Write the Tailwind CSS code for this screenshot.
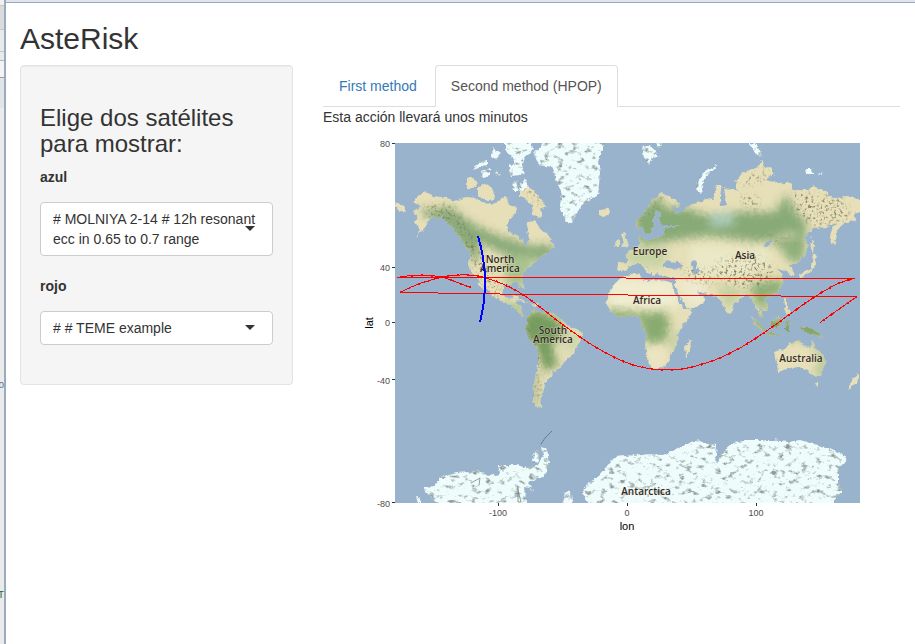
<!DOCTYPE html>
<html lang="es">
<head>
<meta charset="utf-8">
<meta name="viewport" content="width=device-width, initial-scale=1">
<title>AsteRisk</title>
<script src="https://cdn.jsdelivr.net/npm/@tailwindcss/browser@4"></script>
</head>
<body class="flex min-h-screen bg-white font-['Liberation_Sans',Arial,sans-serif] text-sm leading-5 text-[#333]">

<!-- Edge of the window behind -->
<div class="flex w-[6px] shrink-0 border-r border-[#8eabd8] bg-[#ebebeb]" aria-hidden="true">
  <div class="flex w-1 flex-col overflow-hidden text-[10px]">
    <div class="h-[6px] border-b border-[#c8c8c8] bg-[#f0f0f0]"></div>
    <div class="h-6 border-b border-[#c8c8c8] bg-[#d9dbdc]"></div>
    <div class="h-[22px] border-b border-[#c4c8c8] bg-[#e6ebec]"></div>
    <div class="h-[9px] border-b border-[#b4b4b4] bg-[#e6ebec]"></div>
    <div class="h-[17px] border-b border-[#9c9c9c] bg-[#f4f4f4]"></div>
    <div class="h-[30px] bg-[#dfe6e8]"></div>
    <div class="flex h-[285px] items-end justify-end leading-4 text-[#5f6f8c]"><span>o</span></div>
    <div class="flex h-[211px] items-end justify-end font-mono leading-4 text-[#1f6b26]"><span>T</span></div>
  </div>
  <div class="w-px bg-[#a9a9ab]"></div>
</div>

<div class="min-w-0 flex-1">
  <div class="h-[3px] border-b border-[#8eabd8] bg-[#e4e4e6]"></div>

  <header class="px-[14px] pt-[19px] pb-[10px]">
    <h1 class="text-3xl leading-[33px]">AsteRisk</h1>
  </header>

  <div class="grid grid-cols-3">
    <aside class="pr-4 pl-[14px]">
      <form class="rounded border border-[#e3e3e3] bg-[#f5f5f5] px-[19px] pt-[39px] pb-[39px] shadow-[inset_0_1px_1px_rgba(0,0,0,0.05)]">
        <h2 class="mb-[10px] text-2xl leading-[26px]">Elige dos satélites para mostrar:</h2>

        <label for="azul" class="block font-bold">azul</label>
        <div class="relative mt-[15px] mb-5">
          <select id="azul" class="block h-[54px] w-full appearance-none rounded border border-[#ccc] bg-white px-3 py-[6px] text-sm leading-5 whitespace-normal">
            <option># MOLNIYA 2-14 # 12h resonant ecc in 0.65 to 0.7 range</option>
          </select>
          <svg class="pointer-events-none absolute top-1/2 right-[18px] -mt-[3px] h-[5px] w-[10px]" viewBox="0 0 10 5" aria-hidden="true"><path d="M0 0H10L5 5Z" fill="#333"/></svg>
        </div>

        <label for="rojo" class="block font-bold">rojo</label>
        <div class="relative mt-[15px]">
          <select id="rojo" class="block h-[34px] w-full appearance-none rounded border border-[#ccc] bg-white px-3 py-[6px] text-sm leading-5">
            <option># # TEME example</option>
          </select>
          <svg class="pointer-events-none absolute top-1/2 right-[18px] -mt-[3px] h-[5px] w-[10px]" viewBox="0 0 10 5" aria-hidden="true"><path d="M0 0H10L5 5Z" fill="#333"/></svg>
        </div>
      </form>
    </aside>

    <main class="col-span-2 pr-[15px] pl-[14px]">
      <nav class="flex gap-[2px] border-b border-[#ddd]">
        <a href="#first" class="-mb-px rounded-t border border-transparent px-[15px] py-[10px] text-[#337ab7]">First method</a>
        <a href="#second" aria-current="page" class="-mb-px rounded-t border border-[#ddd] border-b-white bg-white px-[15px] py-[10px] text-[#555]">Second method (HPOP)</a>
      </nav>
      <p>Esta acción llevará unos minutos</p>

      <svg class="block h-auto w-full" viewBox="323 127 577 410" role="img" aria-label="Trayectorias de los satélites">
        <defs>
          <clipPath id="panel"><rect x="395" y="143" width="465" height="360"/></clipPath>
          <filter id="coast" x="-5%" y="-5%" width="110%" height="110%">
            <feTurbulence type="fractalNoise" baseFrequency="0.22" numOctaves="3" seed="4" result="n"/>
            <feDisplacementMap in="SourceGraphic" in2="n" scale="5" xChannelSelector="R" yChannelSelector="G"/>
          </filter>
          <filter id="ice" x="-5%" y="-5%" width="110%" height="110%" color-interpolation-filters="sRGB">
            <feTurbulence type="fractalNoise" baseFrequency="0.2" numOctaves="3" seed="9" result="n"/>
            <feDisplacementMap in="SourceGraphic" in2="n" scale="5" xChannelSelector="R" yChannelSelector="G" result="s"/>
            <feTurbulence type="fractalNoise" baseFrequency="0.14 0.2" numOctaves="5" seed="21"/>
            <feColorMatrix values="0 0 0 0 .55  0 0 0 0 .6  0 0 0 0 .6  4 0 0 0 -2.2" result="d"/>
            <feComposite in="d" in2="s" operator="in" result="e"/>
            <feMerge><feMergeNode in="s"/><feMergeNode in="e"/></feMerge>
          </filter>
          <filter id="relief" x="-10%" y="-10%" width="120%" height="120%" color-interpolation-filters="sRGB">
            <feGaussianBlur stdDeviation="3" result="b"/>
            <feTurbulence type="fractalNoise" baseFrequency="0.35" numOctaves="3" seed="3"/>
            <feColorMatrix values="0 0 0 0 .5  0 0 0 0 .48  0 0 0 0 .36  3.5 0 0 0 -1.8"/>
            <feComposite in2="b" operator="in"/>
          </filter>
          <filter id="soft" x="-30%" y="-30%" width="160%" height="160%" color-interpolation-filters="sRGB"><feGaussianBlur stdDeviation="4"/></filter>
          <clipPath id="land">
            <path id="northAmerica" d="M413 212L420 207 414 201 422 193 428 192 433 196 447 198 455 201 467 197 475 198 481 203 493 204 503 198 507 197 509 205 517 207 516 213 507 223 508 232 517 235 523 240 525 247 528 246 529 238 527 230 528 222 535 221 541 229 548 235 552 242 555 247 548 252 540 257 535 262 528 268 523 275 522 279 525 289 521 287 518 283 513 283 504 285 502 292 505 298 511 299 513 295 518 296 516 303 520 307 523 315 528 317 522 317 518 311 512 306 503 302 493 297 488 291 481 281 485 291 482 290 477 279 471 273 468 263 471 256 468 250 460 239 455 232 448 223 442 218 432 217 428 223 422 231 416 238 421 229 415 223 417 215Z"/>
            <path id="southAmerica" d="M528 315L533 310 540 312 553 313 562 320 570 327 581 331 582 338 577 347 575 353 567 358 563 364 558 370 553 372 552 377 545 382 544 389 542 395 540 402 543 408 537 407 533 402 533 391 535 378 538 365 538 350 533 343 528 337 525 328 528 322Z"/>
            <path id="africa" d="M613 286L620 278 628 275 639 273 642 279 648 282 653 279 666 281 672 283 673 290 677 298 683 308 692 311 688 319 682 327 677 335 678 343 672 352 670 359 664 367 653 370 648 362 645 345 647 335 642 327 640 317 630 316 618 317 610 310 606 303 608 293ZM685 347L691 339 690 350 686 358Z"/>
            <path id="eurasia" d="M618 263L627 262 627 257 624 254 635 248 640 243 638 237 643 236 645 241 653 239 663 236 665 229 680 225 670 225 661 225 659 218 661 212 656 211 653 220 654 227 650 235 645 234 642 227 637 229 636 221 645 211 652 200 661 193 668 196 679 203 680 208 673 207 676 214 683 211 687 207 695 203 706 199 714 200 717 185 722 185 720 196 721 206 727 205 724 189 733 188 739 192 735 183 742 173 757 167 762 161 766 167 773 168 773 174 766 180 777 183 788 182 793 186 793 190 807 190 813 186 823 190 833 198 850 197 862 200 862 211 853 215 857 220 843 223 838 230 835 243 831 245 830 235 833 227 838 222 827 227 813 228 805 237 808 246 805 255 798 263 790 265 794 276 791 276 787 270 779 269 783 276 783 284 778 292 770 297 764 298 768 305 767 311 763 311 758 306 764 318 761 318 756 308 752 298 747 295 740 298 734 305 730 314 727 313 722 303 718 297 713 295 703 293 697 290 699 295 706 298 703 304 691 309 687 308 681 298 675 286 675 277 665 277 657 273 653 276 649 268 645 265 651 271 649 275 641 264 633 264 625 272 617 271Z"/>
            <path id="australia" d="M775 352L787 348 790 343 800 340 804 346 809 349 812 340 816 349 823 355 826 363 820 376 812 375 807 370 800 367 790 368 778 372 777 363ZM815 383L820 383 817 387Z"/>
            <path id="islands" d="M621 233L626 232 625 238 629 243 628 247 621 248 624 242ZM616 241L620 239 620 246 615 246ZM599 211L609 208 610 213 604 217 599 215ZM520 182L530 187 543 201 546 208 540 207 542 218 533 215 532 205 526 199 520 196ZM467 178L474 177 478 184 473 189 467 188ZM478 187L485 183 492 188 495 198 487 201 478 196ZM751 317L759 322 766 331 763 332 755 325ZM770 321L780 316 782 323 777 328 771 326ZM767 332L781 335 780 337 767 335ZM785 322L791 322 788 326 790 331 786 331ZM799 326L810 328 819 333 823 338 815 335 806 333ZM784 299L787 299 787 307 791 314 786 314ZM799 274L809 270 813 262 812 254 817 257 814 269 807 274 800 279ZM812 236L814 244 813 252 811 250ZM512 298L521 299 529 303 520 301ZM530 303L539 304 535 307ZM857 374L860 376 856 383 847 391 850 384ZM395 202L404 206 406 212 397 210Z"/>
          </clipPath>
        </defs>

        <g clip-path="url(#panel)">
          <rect x="395" y="143" width="465" height="360" fill="#9ab3cd"/>
          <g filter="url(#coast)">
            <g fill="#e6dfb8">
              <use href="#northAmerica"/><use href="#southAmerica"/><use href="#africa"/><use href="#eurasia"/><use href="#australia"/><use href="#islands"/>
            </g>
            <g clip-path="url(#land)">
              <g filter="url(#soft)">
                <path d="M420 210L450 207 475 225 500 236 530 245 556 245 552 257 530 262 500 252 478 242 480 258 474 262 458 240 440 220 425 216Z" fill="#8aaa79"/>
                <path d="M505 255L535 255 524 290 505 284Z" fill="#a9c28e"/>
                <path d="M480 255L503 255 500 280 485 280Z" fill="#e2dfb4"/>
                <path d="M488 290L500 300 522 305 522 318 508 308Z" fill="#a5bd87"/>
                <path d="M522 318L535 309 558 318 564 333 552 345 556 362 562 363 545 372 535 345 524 338Z" fill="#769c5e"/>
                <path d="M532 370L538 372 538 408 532 405Z" fill="#abb98c"/>
                <path d="M563 330L583 333 576 352 562 350Z" fill="#cdd6aa"/>
                <path d="M605 277L674 281 680 307 650 308 610 307Z" fill="#efecd0"/>
                <path d="M608 309L640 313 665 312 670 322 666 342 645 343 640 320 610 320Z" fill="#88ab70"/>
                <path d="M674 334L682 330 676 352 670 352Z" fill="#b9c899"/>
                <path d="M645 345L668 345 662 372 648 368Z" fill="#ebe4c2"/>
                <path d="M635 215L660 195 664 207 686 208 705 215 730 212 752 212 775 212 786 194 796 212 806 222 806 236 790 232 762 242 740 240 710 236 690 238 665 242 640 244 636 228Z" fill="#88aa76"/>
                <path d="M768 242L806 234 804 262 790 262 780 248Z" fill="#8fb07b"/>
                <path d="M710 213L734 213 734 226 710 228Z" fill="#a9c8b4"/>
                <path d="M616 256L650 244 668 252 662 268 630 264Z" fill="#c6d2a3"/>
                <path d="M690 245L765 248 775 262 740 276 690 274Z" fill="#eae8c6"/>
                <path d="M676 278L706 280 706 306 688 306Z" fill="#eeeace"/>
                <path d="M750 284L784 278 782 294 768 298 768 312 754 302Z" fill="#8eae76"/>
                <path d="M716 285L748 290 738 298 728 312Z" fill="#c1cfa0"/>
                <path d="M810 340L824 352 828 365 818 378 814 375 821 362Z" fill="#a9c18d"/>
                <path d="M748 315L824 323 824 340 768 338Z" fill="#82a36c"/>
                <path d="M618 232L632 240 628 250 616 247Z" fill="#d6dcb4"/>
              </g>
            </g>
            <path d="M663 265C666 258 670 260 673 263 676 260 681 263 683 267 676 270 668 268 663 267ZM691 262C695 258 699 262 696 267 701 273 697 277 693 273 692 269 693 267 691 262ZM765 245L771 239 773 241 767 247Z" fill="#9ab3cd"/>
          </g>
          <g clip-path="url(#land)">
            <g filter="url(#relief)">
              <path d="M418 205L450 205 472 235 480 252 496 284 503 298 495 296 472 262 455 225 425 215Z"/>
              <path d="M527 316L531 335 541 347 540 395 535 400 536 350 526 335Z"/>
              <path d="M792 190L845 200 850 218 815 226 797 215ZM742 195L760 197 755 210 743 207ZM765 235L805 240 770 242ZM718 262L750 252 775 268 770 282 750 290 728 284 715 274ZM680 268L715 270 712 285 690 280ZM636 225L652 205 662 194 665 197 642 222Z"/>
              <path d="M520 183L530 186 545 207 538 204ZM743 180L765 168 768 178 745 187Z"/>
            </g>
          </g>

          <g fill="#effcfc" filter="url(#ice)">
            <path d="M543 141L543 144 534 154 538 165 552 167 557 182 562 193 560 205 563 215 568 224 572 224 575 213 587 201 598 195 600 172 598 162 603 150 603 141Z"/>
            <path d="M505 141L530 141 534 148 524 160 521 176 515 165 512 157 505 150ZM512 184L516 180 518 191 514 191ZM525 178L519 191 529 188ZM508 164L522 167 525 174 512 176ZM493 148L500 153 497 160 491 156ZM480 162L487 160 487 165 473 170ZM482 172L490 168 490 176 483 178ZM497 169L500 175 496 177Z"/>
            <path d="M642 147L650 145 656 152 659 159 652 157 649 165 644 157ZM655 141L662 143 659 148ZM747 142L755 144 763 155 758 156 753 149ZM805 169L812 169 814 174 806 174ZM818 173L822 174 820 175Z"/>
            <path d="M697 192L697 184 702 174 716 165 716 168 705 177 701 188 702 193Z"/>
            <path d="M423 487L434 486 440 477 457 473 480 471 488 476 500 474 498 465 517 465 527 468 538 465 543 455 541 447 547 449 549 463 543 477 527 482 534 490 524 488 527 505 440 505 427 493ZM416 497L421 499 422 504 418 503ZM535 453L538 450 539 462 532 460Z"/>
            <path d="M582 492L587 485 600 475 607 467 615 457 643 454 663 455 680 448 690 442 700 440 707 444 717 445 715 465 723 452 733 443 750 440 773 440 787 442 800 440 813 444 830 448 847 457 845 463 838 468 838 482 842 492 835 497 835 505 590 505ZM563 505L565 491 571 492 572 505Z"/>
          </g>
          <g fill="none" stroke="#69777d" stroke-width="1" stroke-linecap="round">
            <path d="M541 444L545 438 552 431" stroke-dasharray="2 1"/>
            <path d="M518 486L518 502 521 502 517 486M471 483L480 478 479 485" stroke-width=".7"/>
          </g>

          <g font-family="'Open Sans','Noto Sans',sans-serif" font-size="10" font-weight="600" fill="#33291f" stroke="#f4f1df" stroke-opacity=".5" stroke-width="1" paint-order="stroke" text-anchor="middle">
            <text x="500" y="263">North</text>
            <text x="500" y="272">America</text>
            <text x="553" y="334">South</text>
            <text x="553" y="343">America</text>
            <text x="650" y="255">Europe</text>
            <text x="745" y="259">Asia</text>
            <text x="647" y="304">Africa</text>
            <text x="801" y="362">Australia</text>
            <text x="646" y="495">Antarctica</text>
          </g>

          <g fill="none" stroke="#f00" shape-rendering="crispEdges">
            <path d="M397 277.5H626M626 278.5H855M400 292.5H438M438 293.5H500M500 294.5H628M628 295.5H781M781 296.5H857"/>
            <path id="orbit" d="M471 287.5C462 285 453 280 443 277.500 433 275 415 274 397 277.500M400 292.500C414 285 428 280 443 277 456 274 474 274 486 278 500 282 511 287 522 294 540 306 552 317 566 327 582 339 600 351 620 360 634 366 646 369 658 369.500 668 370 680 370 690 367.500 710 363 726 356 740 348 759 337 774 326 790 314 805 303 820 293 833 286 841 282 848 280 855 278M857 296.500L820 322.500"/>
            <use href="#orbit" stroke-width="2" stroke-dasharray="2 8"/>
            <path d="M478 236C483 253 485 267 485 280S484 307 480 322" stroke="#00f" stroke-width="2"/>
          </g>
        </g>

        <path d="M392 143.500H395M392 267.500H395M392 322.500H395M392 379.500H395M392 502.500H395M498.500 503V506M627.500 503V506M756.500 503V506" stroke="#333"/>
        <g font-family="'Liberation Sans',Arial,sans-serif" font-size="9" fill="#4d4d4d">
          <g text-anchor="end">
            <text x="390" y="147">80</text>
            <text x="390" y="271">40</text>
            <text x="390" y="326">0</text>
            <text x="390" y="384">-40</text>
            <text x="390" y="507">-80</text>
          </g>
          <g text-anchor="middle">
            <text x="498" y="516">-100</text>
            <text x="627" y="516">0</text>
            <text x="756" y="516">100</text>
          </g>
        </g>
        <g font-family="'Liberation Sans',Arial,sans-serif" font-size="11" fill="#000" text-anchor="middle">
          <text x="627" y="530">lon</text>
          <text transform="translate(373 323) rotate(-90)">lat</text>
        </g>
      </svg>
    </main>
  </div>
</div>
</body>
</html>
